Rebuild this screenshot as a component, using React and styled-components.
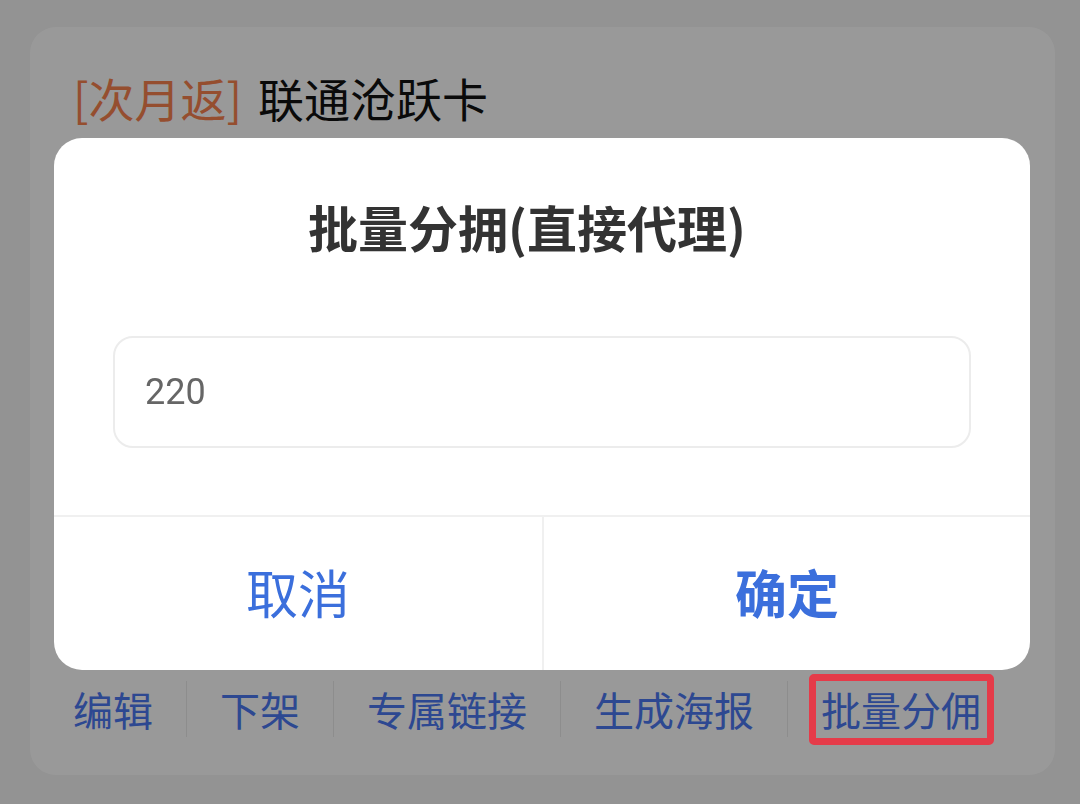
import React from "react";
import styled, { createGlobalStyle } from "styled-components";

const GlobalStyle = createGlobalStyle`
  html, body {
    margin: 0;
    padding: 0;
    background: #f5f5f5;
    font-family: "Noto Sans CJK SC", "Noto Sans", sans-serif;
  }
  * { box-sizing: border-box; }
`;

const Page = styled.div`
  padding: 27px 25px 29px 30px;
  min-height: 804px;
`;

const Card = styled.div`
  width: 1025px;
  height: 748px;
  background: #ffffff;
  border-radius: 26px;
  padding: 40px 43px 38px;
  display: flex;
  flex-direction: column;
  justify-content: space-between;
`;

const ProductTitle = styled.div`
  font-size: 46px;
  line-height: 60px;
  color: #111111;
  white-space: nowrap;
`;

const Tag = styled.span`
  color: #f9834f;
  margin-right: 16px;
`;

const Actions = styled.div`
  display: flex;
  align-items: center;
`;

const ActionItem = styled.div`
  padding: 0 33px;
  line-height: 56px;
  font-size: 40px;
  color: #4b78f2;
  white-space: nowrap;
  &:first-child {
    padding-left: 0;
  }
  & + & {
    border-left: 1px solid #ececec;
  }
`;

const Label = styled.span`
  position: relative;
  display: inline-block;
`;

const Highlight = styled.span`
  position: absolute;
  left: -12px;
  right: -13px;
  top: -7px;
  bottom: -8px;
  border: 7px solid #e53b49;
  border-radius: 5px;
  z-index: 20;
  pointer-events: none;
`;

const Overlay = styled.div`
  position: fixed;
  inset: 0;
  background: rgba(0, 0, 0, 0.4);
  z-index: 10;
  display: flex;
  align-items: center;
  justify-content: center;
  padding: 4px 0 0 4px;
`;

const Dialog = styled.div`
  width: 976px;
  background: #ffffff;
  border-radius: 28px;
  overflow: hidden;
  display: flex;
  flex-direction: column;
`;

const DialogBody = styled.div`
  padding: 58px 59px 67px;
  display: flex;
  flex-direction: column;
  gap: 80px;
  border-bottom: 2px solid #f0f0f0;
`;

const DialogTitle = styled.div`
  font-size: 50px;
  line-height: 60px;
  font-weight: 700;
  color: #333333;
  text-align: center;
  padding-right: 30px;
`;

const NumberInput = styled.input`
  width: 100%;
  height: 112px;
  border: 2px solid #ececec;
  border-radius: 20px;
  padding: 0 30px;
  font-family: Roboto, "Noto Sans", sans-serif;
  font-size: 36px;
  color: #666666;
  background: #ffffff;
  outline: none;
`;

const ButtonRow = styled.div`
  display: grid;
  grid-template-columns: 1fr 1fr;
  height: 153px;
`;

const DialogButton = styled.button`
  border: none;
  background: transparent;
  font-family: "Noto Sans CJK SC", sans-serif;
  font-size: 52px;
  font-weight: ${(p) => (p.$bold ? 700 : 400)};
  color: #3b6fdc;
  display: flex;
  align-items: center;
  justify-content: center;
  padding: 0 0 4px;
  & + & {
    border-left: 2px solid #f0f0f0;
  }
`;

const actions = ["编辑", "下架", "专属链接", "生成海报", "批量分佣"];

export default function App() {
  return (
    <>
      <GlobalStyle />
      <Page>
        <Card>
          <ProductTitle>
            <Tag>[次月返]</Tag>联通沧跃卡
          </ProductTitle>
          <Actions>
            {actions.map((a) => (
              <ActionItem key={a}>
                <Label>
                  {a}
                  {a === "批量分佣" && <Highlight />}
                </Label>
              </ActionItem>
            ))}
          </Actions>
        </Card>
      </Page>
      <Overlay>
        <Dialog>
          <DialogBody>
            <DialogTitle>批量分拥(直接代理)</DialogTitle>
            <NumberInput defaultValue="220" />
          </DialogBody>
          <ButtonRow>
            <DialogButton>取消</DialogButton>
            <DialogButton $bold>确定</DialogButton>
          </ButtonRow>
        </Dialog>
      </Overlay>
    </>
  );
}
